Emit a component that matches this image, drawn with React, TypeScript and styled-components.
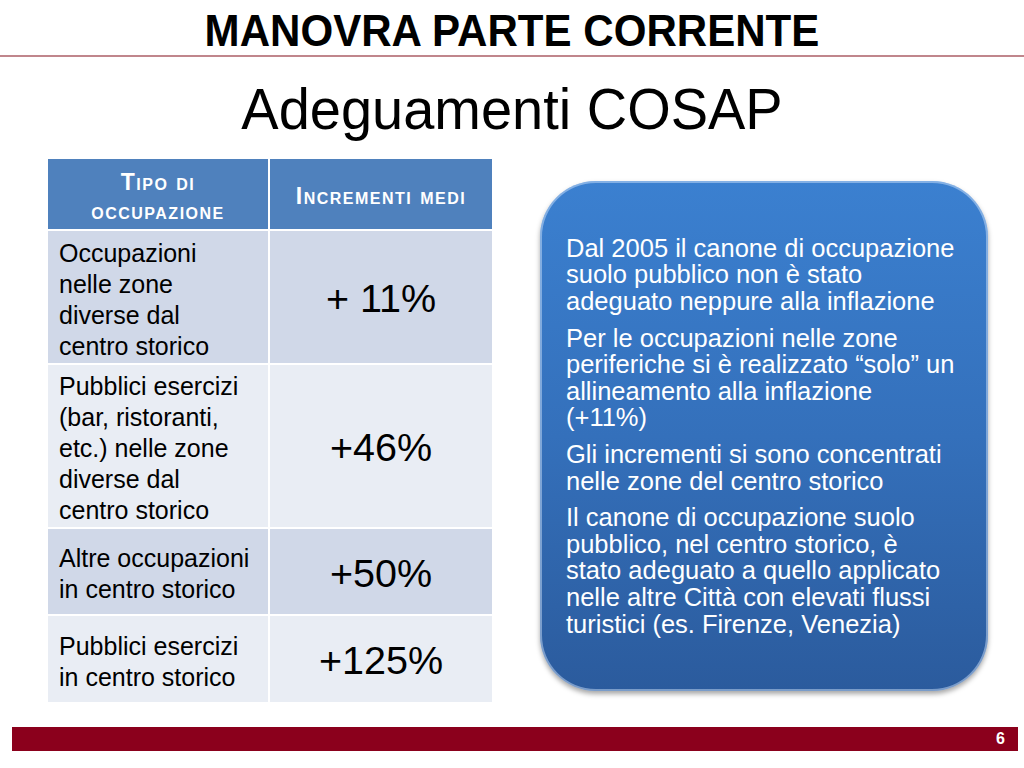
import { styled, createGlobalStyle } from 'styled-components';

const GlobalStyle = createGlobalStyle`
  html, body {
    margin: 0;
    padding: 0;
    background: #ffffff;
  }
  body {
    font-family: "Liberation Sans", Arial, Helvetica, sans-serif;
    color: #000000;
  }
`;

// line breaks follow the slide
const ROWS = [
  { tipo: 'Occupazioni\nnelle zone\ndiverse dal\ncentro storico', value: '+ 11%', tone: 'dark' },
  { tipo: 'Pubblici esercizi\n(bar, ristoranti,\netc.) nelle zone\ndiverse dal\ncentro storico', value: '+46%', tone: 'light' },
  { tipo: 'Altre occupazioni\nin centro storico', value: '+50%', tone: 'dark' },
  { tipo: 'Pubblici esercizi\nin centro storico', value: '+125%', tone: 'light' },
] as const;

const NOTES = [
  'Dal 2005 il canone di occupazione\nsuolo pubblico non è stato\nadeguato neppure alla inflazione',
  'Per le occupazioni nelle zone\nperiferiche si è realizzato “solo” un\nallineamento alla inflazione\n(+11%)',
  'Gli incrementi si sono concentrati\nnelle zone del centro storico',
  'Il canone di occupazione suolo\npubblico, nel centro storico, è\nstato adeguato a quello applicato\nnelle altre Città con elevati flussi\nturistici (es. Firenze, Venezia)',
];

function App() {
  return (
    <Styled.Slide>
      <GlobalStyle />
      <Styled.TopTitle>MANOVRA PARTE CORRENTE</Styled.TopTitle>
      <Styled.Rule />
      <Styled.Subtitle>Adeguamenti COSAP</Styled.Subtitle>

      <Styled.Body>
        <Styled.Table>
          <Styled.HeadCell>{'Tipo di\noccupazione'}</Styled.HeadCell>
          <Styled.HeadCell>Incrementi medi</Styled.HeadCell>
          {ROWS.map(function (row) {
            return [
              <Styled.TextCell key={row.value + '-t'} $tone={row.tone}>
                {row.tipo}
              </Styled.TextCell>,
              <Styled.ValueCell key={row.value + '-v'} $tone={row.tone}>
                {row.value}
              </Styled.ValueCell>,
            ];
          })}
        </Styled.Table>

        <Styled.Callout>
          {NOTES.map(function (note) {
            return <Styled.Note key={note}>{note}</Styled.Note>;
          })}
        </Styled.Callout>
      </Styled.Body>

      <Styled.Footer>
        <Styled.PageNum>6</Styled.PageNum>
      </Styled.Footer>
    </Styled.Slide>
  );
}

export default App;

const Styled = {
  Slide: styled.div`
    width: 1024px;
    height: 768px;
    overflow: hidden;
    display: flex;
    flex-direction: column;
    background: #ffffff;
  `,

  TopTitle: styled.h1`
    margin: 0;
    height: 55px;
    box-sizing: border-box;
    padding-top: 7px;
    line-height: 47px;
    font-size: 45px;
    font-weight: 700;
    text-align: center;
    color: #000000;
    transform: scaleX(0.935);
  `,

  Rule: styled.div`
    height: 2px;
    background: #c0868c;
  `,

  Subtitle: styled.h2`
    margin: 20px 0 0;
    line-height: 64px;
    font-size: 58px;
    font-weight: 400;
    text-align: center;
    color: #000000;
    transform: scaleX(0.965);
  `,

  Body: styled.div`
    margin-top: 18px;
    padding-left: 48px;
    display: flex;
    align-items: flex-start;
    gap: 48px;
  `,

  Table: styled.div`
    display: grid;
    grid-template-columns: 220px 222px;
    grid-template-rows: 70px 132px 162px 85px 86px;
    gap: 2px;
    background: #ffffff;
  `,

  HeadCell: styled.div`
    background: #4f81bd;
    color: #ffffff;
    display: flex;
    align-items: center;
    justify-content: center;
    text-align: center;
    padding-top: 5px;
    white-space: pre-line;
    font-size: 23px;
    line-height: 29px;
    letter-spacing: 1.5px;
    font-weight: 700;
    font-variant: small-caps;
  `,

  TextCell: styled.div<{ $tone: 'dark' | 'light' }>`
    background: ${(p) => (p.$tone === 'dark' ? '#d0d8e8' : '#e9edf4')};
    display: flex;
    align-items: center;
    padding: 5px 4px 0 11px;
    white-space: pre-line;
    font-size: 25px;
    line-height: 31px;
  `,

  ValueCell: styled.div<{ $tone: 'dark' | 'light' }>`
    background: ${(p) => (p.$tone === 'dark' ? '#d0d8e8' : '#e9edf4')};
    display: flex;
    align-items: center;
    justify-content: center;
    padding-top: 3px;
    font-size: 39.5px;
  `,

  Callout: styled.div`
    margin-top: 22px;
    width: 448px;
    height: 510px;
    box-sizing: border-box;
    padding: 0 8px 0 26px;
    border-radius: 56px;
    background: linear-gradient(180deg, #3b80d0 0%, #3470bb 50%, #2b5b9d 100%);
    box-shadow:
      inset 0 0 0 2px rgba(220, 235, 255, 0.45),
      0 3px 5px rgba(0, 0, 0, 0.35);
    display: flex;
    flex-direction: column;
    justify-content: center;
    gap: 10px;
    color: #ffffff;
  `,

  Note: styled.p`
    margin: 0;
    white-space: pre-line;
    font-size: 25.5px;
    line-height: 26.6px;
  `,

  Footer: styled.div`
    margin: 25px 6px 0 12px;
    height: 24px;
    background: #8b001c;
    display: flex;
    align-items: center;
    justify-content: flex-end;
    padding-right: 13px;
  `,

  PageNum: styled.span`
    color: #ffffff;
    font-size: 16px;
    font-weight: 700;
  `,
};
